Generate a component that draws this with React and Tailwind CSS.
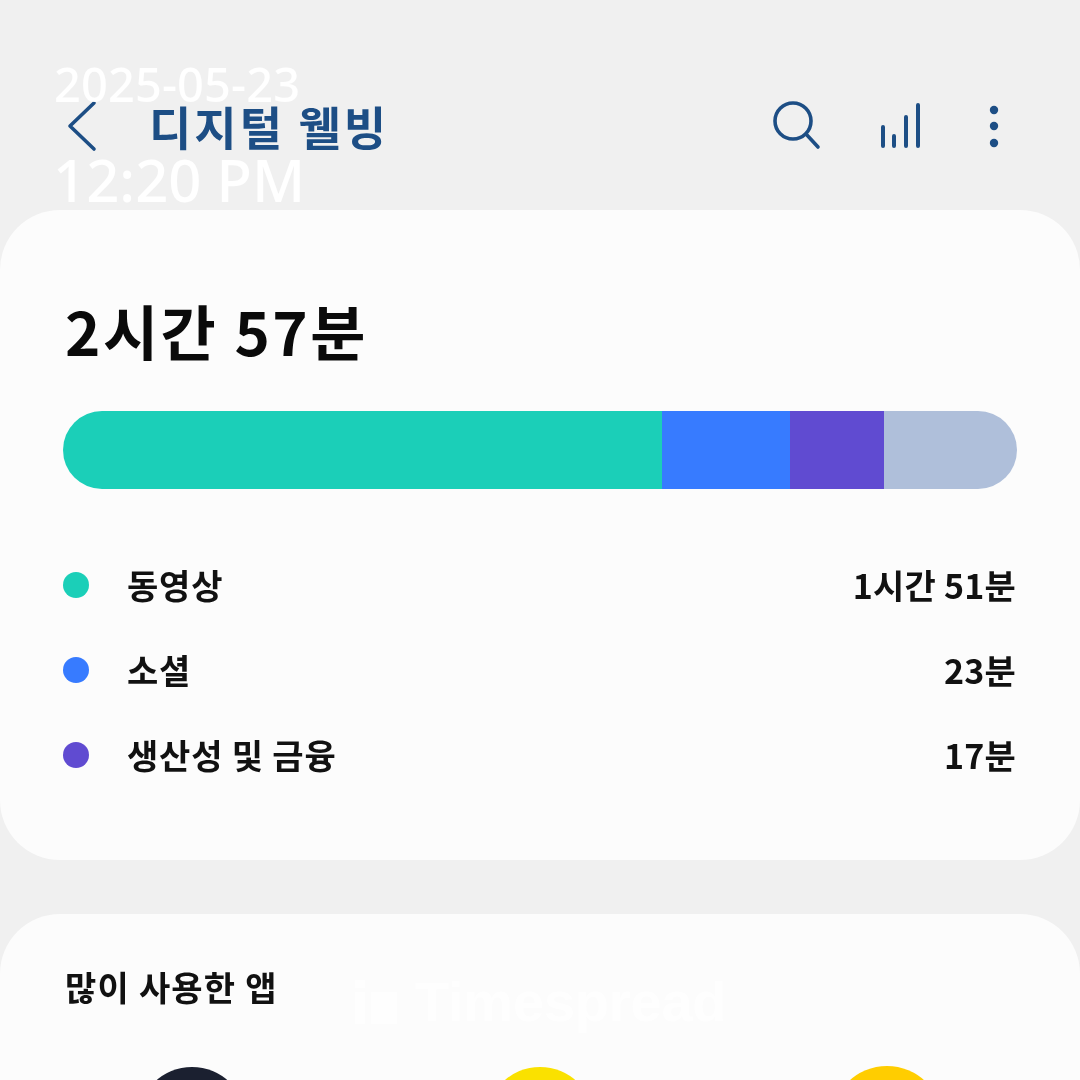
export default function App() {
  const kr = "font-['Noto_Sans_CJK_KR','Noto_Sans',sans-serif]";
  const rows = [
    ["동영상", "1시간 51분", "bg-[#1bcfb8]"],
    ["소셜", "23분", "bg-[#377bff]"],
    ["생산성 및 금융", "17분", "bg-[#604bd1]"],
  ];
  return (
    <div className="h-[1080px] w-[1080px] overflow-hidden bg-[#f0f0f0]">
      <div className={`relative h-[1080px] w-[1080px] blur-[0.5px] ${kr}`}>
        <header className="flex h-[210px] items-start pl-[67px] pr-[78px] pt-[96px] text-[#1d4e85]">
          <svg width="32" height="60" viewBox="0 0 32 60" fill="none" stroke="currentColor" strokeWidth="3.6" strokeLinecap="round" strokeLinejoin="round">
            <path d="M27 7 L3 30 L27 53" />
          </svg>
          <h1 className="ml-[50px] mt-[-3px] text-[46px] font-bold leading-[64px] tracking-[3px]">디지털 웰빙</h1>
          <div className="ml-auto flex items-start">
            <svg width="50" height="60" viewBox="0 0 50 60" fill="none" stroke="currentColor" strokeWidth="3.6" strokeLinecap="round">
              <circle cx="20" cy="25" r="18" />
              <path d="M33 38 L45 51" />
            </svg>
            <svg className="ml-[57px]" width="44" height="60" viewBox="0 0 44 60" fill="none" stroke="currentColor" strokeWidth="4" strokeLinecap="round">
              <path d="M3 31 V50 M14 40 V50 M26 21 V50 M38 9 V50" />
            </svg>
            <svg className="ml-[62px]" width="16" height="60" viewBox="0 0 16 60" fill="currentColor">
              <circle cx="8" cy="14" r="4.2" />
              <circle cx="8" cy="30" r="4.2" />
              <circle cx="8" cy="47" r="4.2" />
            </svg>
          </div>
        </header>

        <section className="h-[650px] rounded-[60px] bg-[#fcfcfc] px-[63px] pt-[82px]">
          <div className="ml-[2px] text-[60px] font-semibold leading-[76px] tracking-[2.5px] text-[#0a0a0a]">2시간 57분</div>
          <div className="mt-[43px] flex h-[78px] w-[954px] overflow-hidden rounded-full">
            <div className="w-[599px] bg-[#1bcfb8]" />
            <div className="w-[128px] bg-[#377bff]" />
            <div className="w-[94px] bg-[#604bd1]" />
            <div className="flex-1 bg-[#afbfda]" />
          </div>
          <ul className="mt-[53px] flex flex-col text-[34px] font-semibold text-[#111111]">
            {rows.map(([name, value, color]) => (
              <li key={name} className="flex h-[85px] items-center">
                <span className={`h-[26px] w-[26px] rounded-full ${color}`} />
                <span className="ml-[38px] tracking-[0.8px]">{name}</span>
                <span className="ml-auto pr-px tracking-[0.2px]">{value}</span>
              </li>
            ))}
          </ul>
        </section>

        <section className="mt-[54px] h-[400px] rounded-[60px] bg-[#fcfcfc] px-[63px] pt-[45px]">
          <h2 className="ml-[2px] text-[34px] font-semibold leading-[56px] tracking-[1.2px] text-[#111111]">많이 사용한 앱</h2>
          <div className="mt-[52px] flex">
            <div className="ml-[75px] h-[108px] w-[108px] rounded-full bg-[#1b2030]" />
            <div className="ml-[240px] h-[108px] w-[108px] rounded-full bg-[#fae100]" />
            <div className="ml-[237px] mt-[-1px] h-[112px] w-[112px] rounded-full bg-[#ffcd00]" />
          </div>
        </section>

        {/* date-stamp and watermark overlays */}
        <div className="absolute left-[54px] top-[54px] font-['Noto_Sans',sans-serif] text-[47px] font-medium leading-[60px] tracking-[0.1px] text-white/95">2025-05-23</div>
        <div className="absolute left-[53px] top-[140px] font-['Noto_Sans',sans-serif] text-[58px] font-medium leading-[80px] text-white/95">12:20 PM</div>
        <div className="absolute left-[355px] top-[972px] flex items-center gap-[18px] font-['Liberation_Sans',sans-serif] text-[56px] font-bold leading-[60px] text-white/70">
          <svg width="42" height="44" viewBox="0 0 42 44" fill="currentColor">
            <rect x="0" y="0" width="10" height="8" />
            <rect x="0" y="12" width="10" height="32" />
            <rect x="16" y="12" width="26" height="32" />
          </svg>
          <span className="tracking-[-0.2px]">Timespread</span>
        </div>
      </div>
    </div>
  );
}
